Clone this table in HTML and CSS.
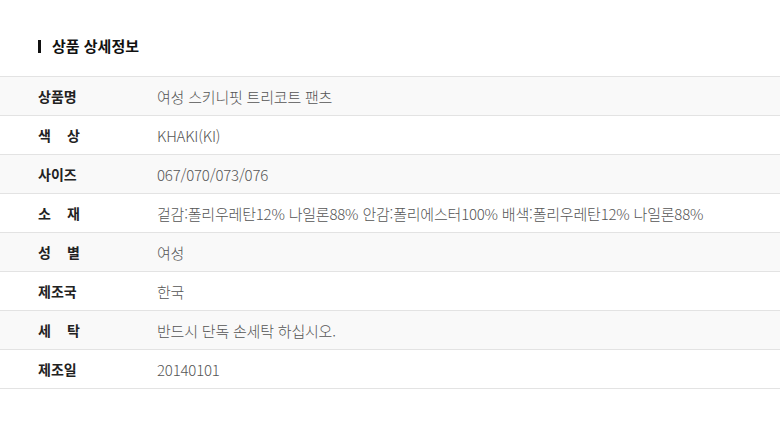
FILE: index.html
```html
<!DOCTYPE html>
<html lang="ko">
<head>
<meta charset="utf-8">
<link rel="stylesheet" href="styles.css">
</head>
<body>
<div class="page">
  <h2 class="title">상품 상세정보</h2>
  <div class="table">
    <div class="row alt"><div class="label">상품명</div><div class="value">여성 스키니핏 트리코트 팬츠</div></div>
    <div class="row"><div class="label">색 상</div><div class="value">KHAKI(KI)</div></div>
    <div class="row alt"><div class="label">사이즈</div><div class="value">067/070/073/076</div></div>
    <div class="row"><div class="label">소 재</div><div class="value">겉감:폴리우레탄12% 나일론88% 안감:폴리에스터100% 배색:폴리우레탄12% 나일론88%</div></div>
    <div class="row alt"><div class="label">성 별</div><div class="value">여성</div></div>
    <div class="row"><div class="label">제조국</div><div class="value">한국</div></div>
    <div class="row alt"><div class="label">세 탁</div><div class="value">반드시 단독 손세탁 하십시오.</div></div>
    <div class="row"><div class="label">제조일</div><div class="value">20140101</div></div>
  </div>
</div>
</body>
</html>
```
FILE: styles.css
```css
html, body { margin: 0; padding: 0; background: #fff; }
body { font-family: "Noto Sans CJK KR", "Noto Sans", sans-serif; }
.page { padding-top: 36px; }
.title {
  margin: 0 0 20px 38px;
  font-size: 15px;
  font-weight: 700;
  color: #111;
  line-height: 20px;
  display: flex;
  align-items: center;
  gap: 11px;
}
.title::before {
  content: "";
  width: 3px;
  height: 13px;
  background: #111;
}
.table { border-top: 1px solid #e3e3e3; }
.row {
  display: flex;
  align-items: center;
  height: 38px;
  border-bottom: 1px solid #e3e3e3;
  font-size: 14px;
}
.row.alt { background: #f9f9f9; }
.label {
  width: 42px;
  margin-left: 38px;
  margin-right: 77px;
  font-weight: 700;
  color: #222;
  text-align: justify;
  text-align-last: justify;
}
.value {
  color: #555;
  font-weight: 300;
  font-size: 15px;
  letter-spacing: -0.2px;
}
```
